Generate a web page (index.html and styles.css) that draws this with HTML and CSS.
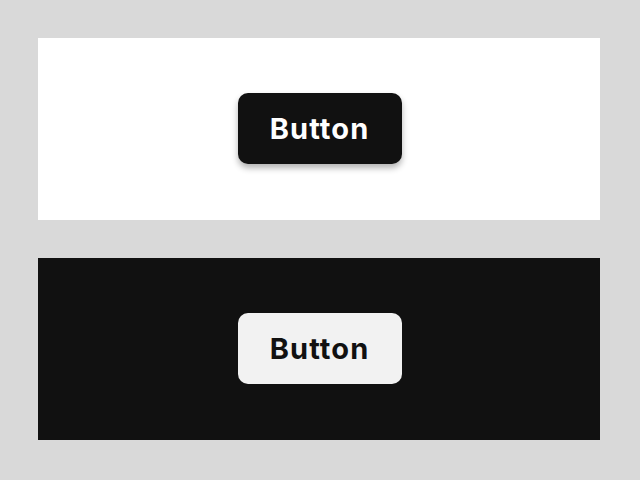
FILE: index.html
```html
<!DOCTYPE html>
<html>
<head>
<meta charset="utf-8">
<link rel="stylesheet" href="styles.css">
</head>
<body>
<div class="page">
  <section class="panel panel-light">
    <button class="btn btn-dark">Button</button>
  </section>
  <section class="panel panel-dark">
    <button class="btn btn-light">Button</button>
  </section>
</div>
</body>
</html>
```
FILE: styles.css
```css
html, body {
  margin: 0;
  padding: 0;
  background: #d9d9d9;
}
.page {
  width: 640px;
  height: 480px;
  box-sizing: border-box;
  padding: 38px 40px 40px 38px;
  display: flex;
  flex-direction: column;
  gap: 38px;
}
.panel {
  height: 182px;
  display: flex;
  align-items: center;
  justify-content: center;
}
.panel-light { background: #ffffff; }
.panel-dark { background: #111111; }
.btn {
  width: 164px;
  height: 71px;
  margin: 0 0 1px 1px;
  border: none;
  border-radius: 10px;
  font-family: Inter, "Noto Sans", sans-serif;
  font-weight: 700;
  font-size: 29px;
  letter-spacing: 1.1px;
  padding: 0;
}
.btn-dark {
  background: #111111;
  color: #ffffff;
  box-shadow: 0 4px 6px rgba(0,0,0,0.3);
}
.btn-light {
  background: #f2f2f2;
  color: #111111;
}
```
